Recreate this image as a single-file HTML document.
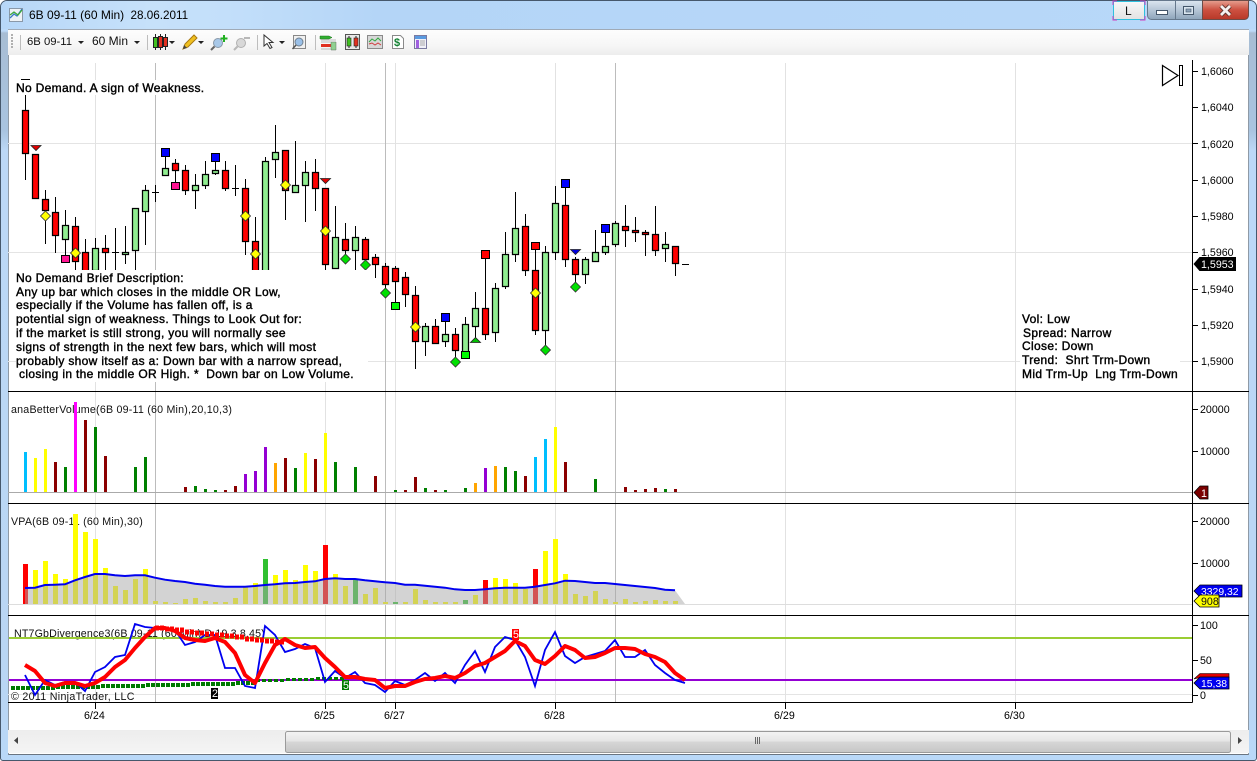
<!DOCTYPE html>
<html><head><meta charset="utf-8"><style>
html,body{margin:0;padding:0;background:#fff;width:1257px;height:761px;overflow:hidden}
#w{position:absolute;left:0;top:0;width:1257px;height:761px;box-sizing:border-box;border:1px solid #46586c;border-radius:7px 7px 3px 3px;background:linear-gradient(180deg,#b9d8f8 0,#bcdaf9 30px,#a7bdd4 32px,#a9c4e0 130px,#bcd8f6 150px,#b9d6f4 700px,#b9d8f8 100%);overflow:hidden}
#t{position:absolute;left:0;top:0;width:1255px;height:28px;background:linear-gradient(90deg,#b7d7f8 0,#c6e1fa 12%,#c3dffa 18%,#b4d5f7 30%,#b8d8f9 100%)}
#tb{position:absolute;left:7px;top:28px;width:1241px;height:26px;background:linear-gradient(180deg,#fdfdfd 0,#f6f6f6 60%,#ececec 100%);border-top:1px solid #a0aab6}
#c{position:absolute;left:7px;top:54px;width:1241px;height:700px;background:#fff;border-right:1px solid #8f9aa6;border-left:1px solid #8f9aa6;box-sizing:border-box;border-bottom:1px solid #6a7480}
svg{position:absolute;left:0;top:0}
text{font-family:"Liberation Sans",sans-serif;font-size:10.67px;fill:#111}
.b text{font-size:12px;stroke:#000;stroke-width:.4px;fill:#000;letter-spacing:.33px}
.l text{fill:#000}
</style></head><body>
<div id="w"><div id="t"></div><div id="tb"></div><div id="c"></div></div>
<svg width="1257" height="761" viewBox="0 0 1257 761">
<!-- scrollbar -->
<defs>
<linearGradient id="sb" x1="0" y1="0" x2="0" y2="1"><stop offset="0" stop-color="#ededed"/><stop offset="1" stop-color="#f4f4f4"/></linearGradient>
<linearGradient id="th" x1="0" y1="0" x2="0" y2="1"><stop offset="0" stop-color="#f4f4f4"/><stop offset=".45" stop-color="#e6e6e6"/><stop offset=".5" stop-color="#d6d6d6"/><stop offset="1" stop-color="#c6c6c6"/></linearGradient>
<linearGradient id="gb" x1="0" y1="0" x2="0" y2="1"><stop offset="0" stop-color="#dce6f0"/><stop offset=".5" stop-color="#b6c6d6"/><stop offset="1" stop-color="#8ea4ba"/></linearGradient>
<linearGradient id="rb" x1="0" y1="0" x2="0" y2="1"><stop offset="0" stop-color="#e6a090"/><stop offset=".5" stop-color="#cc5040"/><stop offset="1" stop-color="#b83828"/></linearGradient>
<linearGradient id="lb" x1="0" y1="0" x2="0" y2="1"><stop offset="0" stop-color="#f8f8f8"/><stop offset="1" stop-color="#e2e2e2"/></linearGradient>
</defs>
<rect x="8" y="730" width="1241" height="23" fill="url(#sb)"/>
<rect x="285.500" y="731.500" width="945" height="21" rx="2" fill="url(#th)" stroke="#9a9a9a"/>
<path d="M18 737v7l-4-3.500z" fill="#444"/><path d="M1238 737v7l4-3.500z" fill="#444"/>
<path d="M755.500 737v7M757.500 737v7M759.500 737v7" stroke="#666"/>

<!-- title -->
<rect x="9.500" y="8.500" width="13" height="13" fill="#eef2f6" stroke="#8a98a8"/>
<path d="M10 18l4-4 3 2 5-7" fill="none" stroke="#3a7ac8" stroke-width="1.300"/><path d="M10 15l4-3 4 3 4-5" fill="none" stroke="#3aa83a" stroke-width="1.300"/>
<text x="29" y="19" style="font-size:12px;fill:#000">6B 09-11 (60 Min)</text>
<text x="130.500" y="19" style="font-size:11.700px;fill:#000">28.06.2011</text>

<!-- window buttons -->
<rect x="1113.500" y="1.500" width="31" height="18" fill="url(#lb)" stroke="#2fc0de"/>
<path d="M1113 5V1h4M1140 1h5v4M1113 16v4h4M1140 20h5v-4" fill="none" stroke="#d040c0"/>
<text x="1125" y="15" style="font-size:12px">L</text>
<path d="M1147.500 0.500h28v19h-24a4 4 0 0 1-4-4z" fill="url(#gb)" stroke="#66788c"/>
<rect x="1175.500" y="0.500" width="27" height="19" fill="url(#gb)" stroke="#66788c"/>
<path d="M1202.500 0.500h46v15a4 4 0 0 1-4 4h-42z" fill="url(#rb)" stroke="#6c4c48"/>
<rect x="1156.500" y="10.500" width="11" height="4" fill="#fff" stroke="#44566a"/>
<rect x="1183.500" y="6.500" width="10" height="8" fill="#d8e4ee" stroke="#44566a" stroke-width="1"/><rect x="1186" y="9" width="5" height="3" fill="#8ea4ba" stroke="#44566a" stroke-width=".6"/>
<path d="M1221 6l9 9M1230 6l-9 9" stroke="#5a3028" stroke-width="4.500"/><path d="M1221 6l9 9M1230 6l-9 9" stroke="#f4f0ee" stroke-width="2.800"/>

<!-- toolbar -->
<path d="M12 34v14" stroke="#b0b0b0" stroke-width="2" stroke-dasharray="2 1"/>
<path d="M20.500 35v15M147.500 35v15M257.500 35v15M315.500 35v15" stroke="#bdbdbd"/>
<text x="27" y="45" style="font-size:11.300px">6B 09-11</text><text x="92" y="45" style="font-size:12px">60 Min</text>
<path d="M78 41h6l-3 3zM134 41h6l-3 3zM169 41h6l-3 3zM198 41h6l-3 3zM279 41h6l-3 3z" fill="#222"/>
<path d="M155.500 34v16M160.500 34v16M165.500 34v16" stroke="#222"/>
<rect x="153.500" y="37.500" width="4" height="10" fill="#40c020" stroke="#222"/><rect x="158.500" y="36.500" width="4" height="11" fill="#e03020" stroke="#222"/><rect x="163.500" y="37.500" width="4" height="9" fill="#e03020" stroke="#222"/>
<path d="M183 49l2-5 9-9 3 3-9 9z" fill="#f0c020" stroke="#a87810"/><path d="M183 49l1-4 3 3z" fill="#444"/>
<circle cx="218" cy="43" r="4.500" fill="#a8c8e8" stroke="#8898a8"/><path d="M214.500 46.500l-3.500 3.500" stroke="#666" stroke-width="2"/><path d="M224 35v7M220.500 38.500h7" stroke="#20b020" stroke-width="2"/>
<circle cx="241" cy="43" r="4.500" fill="#d8d8d8" stroke="#b0b0b0"/><path d="M237.500 46.500l-3.500 3.500" stroke="#b8b8b8" stroke-width="2"/><path d="M244 38h6" stroke="#b8b8b8" stroke-width="2"/>
<path d="M264 35v11l3-2.500 3 5 2-1-3-5h4z" fill="#fff" stroke="#333"/>
<rect x="293.500" y="35.500" width="12" height="13" fill="#f0f0f0" stroke="#888"/><circle cx="299" cy="42" r="4" fill="#9ac0e8" stroke="#708090"/><path d="M296 45l-3.500 4" stroke="#555" stroke-width="1.500"/>
<path d="M320 36h9l3 1.500-3 1.500h-9z" fill="#30b030" stroke="#207020" stroke-width=".5"/><path d="M321 44h10v3h-10z" fill="#e03020"/><path d="M331 42v8h5v-8z" fill="#90d090" stroke="#607060" stroke-width=".5"/><path d="M321 40h15M321 42h10M321 49h10" stroke="#bbb"/>
<rect x="345.500" y="34.500" width="14" height="15" fill="#e8e8e8" stroke="#555"/><path d="M349 36v12M356 36v12" stroke="#222"/><rect x="347" y="38" width="4" height="8" fill="#40c020" stroke="#222" stroke-width=".6"/><rect x="354" y="38" width="4" height="8" fill="#e03020" stroke="#222" stroke-width=".6"/>
<rect x="367.500" y="35.500" width="15" height="13" fill="#d8d8d8" stroke="#8a8a8a"/><path d="M369 42l3-3 3 2 3-3 3 3" fill="none" stroke="#30a840"/><path d="M369 44l3-1 3 2 3-2 3 2" fill="none" stroke="#d04040"/>
<path d="M392.500 35.500h8l3 3v10h-11z" fill="#fff" stroke="#8a8a8a"/><text x="394" y="46" style="font-size:11px;font-weight:bold;fill:#108030">$</text>
<rect x="414.500" y="35.500" width="12" height="13" fill="#f0f0f8" stroke="#7a7aa0"/><rect x="415" y="36" width="11" height="3" fill="#5a9ae0"/><path d="M417.500 40v8" stroke="#a060e0" stroke-width="3"/><path d="M420 41h5M420 43h5M420 45h5" stroke="#aaa"/>

<!-- gridlines -->
<g stroke-width="1" shape-rendering="crispEdges">
<path d="M8 143.500H1192M8 252.500H1192M8 361.500H1192" stroke="#e4e4e4"/>
<path d="M8 694.500H1192" stroke="#e4e4e4"/>
<path d="M95.500 63V702M325.500 63V702M395.500 63V702M555.500 63V702M785.500 63V702M1015.500 63V702" stroke="#e2e2e2"/>
<path d="M155.500 63V702M385.500 63V702M615.500 63V702" stroke="#bcbcbc"/>
</g>

<!-- wicks -->
<path stroke="#000" stroke-width="1" fill="none" shape-rendering="crispEdges" d="M25.500 95V180M45.500 190V244M55.500 197V253M65.500 210V260M75.500 217V270M85.500 239V270M95.500 238V270M105.500 235V270M115.500 228V270M125.500 226V264M135.500 250V270M145.500 185V245M155.500 185V202M165.500 152V172M175.500 159V183M185.500 165V195M195.500 174V209M205.500 161V189M215.500 157V175M225.500 161V191M235.500 165V196M245.500 179V255M255.500 217V270M265.500 157V170M275.500 125V178M285.500 150V220M295.500 141V192M305.500 161V222M315.500 159V211M325.500 188V270M335.500 206V269M345.500 223V257M355.500 226V270M365.500 237V265M375.500 254V278M385.500 263V290M395.500 266V303M405.500 272V307M415.500 286V369M425.500 323V356M435.500 319V344M445.500 317V347M455.500 328V357M465.500 317V352M475.500 292V338M485.500 254V340M495.500 283V342M505.500 232V289M515.500 192V262M525.500 214V276M535.500 246V335M545.500 246V350M555.500 186V260M565.500 183V267M575.500 257V284M585.500 257V284M595.500 230V261M605.500 228V255M615.500 221V247M625.500 205V247M635.500 217V242M645.500 230V256M655.500 206V256M665.500 232V262M675.500 246V276"/>
<path stroke="#000" stroke-width="1" fill="none" shape-rendering="crispEdges" d="M112 252.500h7M152 192.500h7M232 188.500h7M682 264.500h7M21 79.500h9"/>
<!-- red bodies -->
<path fill="#f00" stroke="#000" stroke-width="1.250" d="M22.500 110.500h6v43h-6zM32.500 154.500h6v44h-6zM42.500 199.500h6v11h-6zM52.500 212.500h6v23h-6zM72.500 226.500h6v35h-6zM82.500 252.500h6v20h-6zM102.500 248.500h6v4h-6zM172.500 163.500h6v7h-6zM182.500 170.500h6v20h-6zM222.500 170.500h6v18h-6zM242.500 188.500h6v53h-6zM252.500 241.500h6v30h-6zM282.500 150.500h6v40h-6zM312.500 172.500h6v16h-6zM322.500 188.500h6v76h-6zM342.500 239.500h6v11h-6zM362.500 239.500h6v20h-6zM372.500 257.500h6v7h-6zM382.500 266.500h6v18h-6zM392.500 268.500h6v13h-6zM402.500 277.500h6v17h-6zM412.500 295.500h6v46h-6zM432.500 326.500h6v17h-6zM452.500 334.500h6v16h-6zM482.500 308.500h6v26h-6zM522.500 226.500h6v44h-6zM532.500 270.500h6v60h-6zM562.500 205.500h6v54h-6zM572.500 259.500h6v15h-6zM622.500 226.500h6v4h-6zM632.500 230.500h6v2h-6zM642.500 232.500h6v2h-6zM652.500 234.500h6v16h-6zM672.500 246.500h6v17h-6z"/>
<!-- green bodies -->
<path fill="#90ee90" stroke="#000" stroke-width="1.250" d="M62.500 225.500h6v14h-6zM92.500 248.500h6v22h-6zM122.500 252.500h6v2h-6zM132.500 208.500h6v42h-6zM142.500 190.500h6v21h-6zM162.500 168.500h6v7h-6zM192.500 185.500h6v5h-6zM202.500 174.500h6v11h-6zM212.500 170.500h6v3h-6zM262.500 161.500h6v110h-6zM272.500 152.500h6v7h-6zM292.500 185.500h6v7h-6zM302.500 172.500h6v13h-6zM332.500 237.500h6v31h-6zM352.500 237.500h6v13h-6zM422.500 326.500h6v15h-6zM442.500 334.500h6v7h-6zM462.500 324.500h6v28h-6zM472.500 308.500h6v18h-6zM492.500 288.500h6v44h-6zM502.500 254.500h6v32h-6zM512.500 228.500h6v26h-6zM542.500 252.500h6v78h-6zM552.500 203.500h6v49h-6zM582.500 259.500h6v15h-6zM592.500 252.500h6v9h-6zM602.500 246.500h6v6h-6zM612.500 223.500h6v21h-6zM662.500 244.500h6v4h-6z"/>
<!-- markers -->
<path fill="#ff0" stroke="#333" stroke-width=".8" d="M45.500 211l5 5-5 5-5-5zM75.500 248l5 5-5 5-5-5zM245.500 211l5 5-5 5-5-5zM255.500 249l5 5-5 5-5-5zM285.500 180l5 5-5 5-5-5zM325.500 226l5 5-5 5-5-5zM535.500 288l5 5-5 5-5-5zM415.500 322l5 5-5 5-5-5z"/>
<path fill="#00e000" stroke="#333" stroke-width=".8" d="M345.500 254l5 5-5 5-5-5zM365.500 260l5 5-5 5-5-5zM385.500 288l5 5-5 5-5-5zM455.500 357l5 5-5 5-5-5zM545.500 345l5 5-5 5-5-5zM575.500 282l5 5-5 5-5-5z"/>
<path fill="#00f" stroke="#000" d="M161.500 148.500h8v8h-8zM211.500 153.500h8v8h-8zM441.500 313.500h8v8h-8zM561.500 179.500h8v8h-8zM601.500 224.500h8v8h-8z"/>
<path fill="#ff1493" stroke="#000" d="M61.500 255.500h8v7h-8zM171.500 182.500h8v7h-8z"/>
<path fill="#0f0" stroke="#000" d="M391.500 302.500h8v7h-8zM461.500 351.500h8v7h-8z"/>
<path fill="#f00" stroke="#000" d="M481.500 250.500h8v8h-8zM531.500 242.500h8v7h-8z"/>
<path fill="#e00000" stroke="#222" stroke-width=".8" d="M31 145.500h10l-5 5zM320.500 178.500h10l-5 5z"/>
<path fill="#0000e0" stroke="#222" stroke-width=".8" d="M570.500 249.500h10l-5 5z"/>
<path fill="#00c000" stroke="#222" stroke-width=".8" d="M470.500 342.500h10l-5-5z"/>

<!-- text boxes -->
<rect x="16" y="80" width="189" height="15" fill="#fff"/>
<rect x="16" y="270" width="352" height="112" fill="#fff"/>
<rect x="1020" y="312" width="160" height="70" fill="#fff"/>
<g class="b">
<text x="16" y="92">No Demand. A sign of Weakness.</text>
<text x="16" y="282">No Demand Brief Description:</text>
<text x="16" y="296">Any up bar which closes in the middle OR Low,</text>
<text x="16" y="309">especially if the Volume has fallen off, is a</text>
<text x="16" y="323">potential sign of weakness. Things to Look Out for:</text>
<text x="16" y="337">if the market is still strong, you will normally see</text>
<text x="16" y="351">signs of strength in the next few bars, which will most</text>
<text x="16" y="365">probably show itself as a: Down bar with a narrow spread,</text>
<text x="19" y="378">closing in the middle OR High. *&#160;&#160;Down bar on Low Volume.</text>
<text x="1022" y="323">Vol: Low</text>
<text x="1023" y="337">Spread: Narrow</text>
<text x="1022" y="350">Close: Down</text>
<text x="1022" y="364">Trend:&#160;&#160;Shrt Trm-Down</text>
<text x="1022" y="378">Mid Trm-Up&#160;&#160;Lng Trm-Down</text>
</g>

<!-- skip icon -->
<path d="M1162.500 65.500l15.500 10-15.500 10z" fill="#fff" stroke="#000" stroke-width="1.200"/>
<rect x="1179.500" y="65.500" width="3" height="20" fill="#fff" stroke="#000"/>

<!-- volume panel -->
<text x="11" y="413" style="letter-spacing:.22px">anaBetterVolume(6B 09-11 (60 Min),20,10,3)</text>
<path d="M8 492.500H1192" stroke="#aaa" shape-rendering="crispEdges"/>
<g stroke-width="3" fill="none" shape-rendering="crispEdges">
<path stroke="#00bfff" d="M25.500 452V492M535.500 457V492M545.500 439V492"/>
<path stroke="#ff0" d="M35.500 458V492M45.500 449V492M305.500 453V492M325.500 433V492M555.500 427V492"/>
<path stroke="#8b0000" d="M55.500 462V492M85.500 420V492M105.500 456V492M185.500 487V492M225.500 490V492M235.500 486V492M285.500 458V492M315.500 459V492M375.500 476V492M405.500 490V492M415.500 477V492M435.500 490V492M525.500 476V492M565.500 462V492M625.500 487V492M635.500 490V492M645.500 489V492M655.500 488V492M675.500 489V492"/>
<path stroke="#008000" d="M65.500 467V492M95.500 427V492M135.500 467V492M145.500 457V492M195.500 486V492M205.500 489V492M215.500 490V492M295.500 468V492M335.500 462V492M355.500 467V492M395.500 490V492M425.500 488V492M445.500 490V492M465.500 488V492M505.500 467V492M515.500 471V492M595.500 479V492M665.500 489V492"/>
<path stroke="#f0f" d="M75.500 402V492"/>
<path stroke="#9400d3" d="M245.500 474V492M255.500 471V492M265.500 447V492M485.500 468V492"/>
<path stroke="#ffa500" d="M275.500 463V492M475.500 483V492M495.500 466V492"/>
</g>

<!-- VPA panel -->
<text x="11" y="525" style="letter-spacing:.2px">VPA(6B 09-11 (60 Min),30)</text>
<path d="M8 604.500H1192" stroke="#ddd" shape-rendering="crispEdges"/>
<g stroke-width="5" fill="none" shape-rendering="crispEdges">
<path stroke="#ff0" d="M35.500 570V604M45.500 561V604M55.500 574V604M65.500 579V604M75.500 514V604M85.500 532V604M95.500 539V604M105.500 568V604M115.500 586V604M125.500 590V604M135.500 579V604M145.500 569V604M155.500 601V604M165.500 602V604M175.500 603V604M185.500 599V604M195.500 598V604M205.500 601V604M215.500 602V604M225.500 602V604M235.500 598V604M245.500 586V604M255.500 583V604M275.500 575V604M285.500 570V604M295.500 580V604M305.500 565V604M315.500 571V604M335.500 574V604M345.500 586V604M365.500 594V604M375.500 588V604M385.500 602V604M405.500 602V604M415.500 589V604M425.500 600V604M435.500 602V604M445.500 602V604M455.500 602V604M475.500 595V604M495.500 578V604M505.500 579V604M515.500 583V604M525.500 589V604M545.500 551V604M555.500 539V604M565.500 574V604M575.500 594V604M585.500 596V604M595.500 591V604M605.500 599V604M615.500 602V604M625.500 599V604M635.500 602V604M645.500 601V604M655.500 600V604M665.500 601V604M675.500 601V604"/>
<path stroke="#f00" d="M25.500 564V604M325.500 545V604M485.500 580V604M535.500 569V604"/>
<path stroke="#30c030" d="M265.500 559V604M355.500 580V604M395.500 602V604M465.500 600V604"/>
</g>
<path fill="#a8a8a8" fill-opacity=".5" d="M25 604V588L35 587.700 45 585 55 584.700 65 584.300 75 580.300 85 577 95 574 105 574 115 575.300 125 576 135 575.300 145 575.300 155 577.700 165 579.700 175 581 185 582 195 583.700 205 584.700 215 586 225 586.700 235 586.700 245 586.700 255 586 265 585 275 584.300 285 583.300 295 583 305 582 315 581.300 325 579 335 578.300 345 579 355 579 365 580.300 375 581.300 385 582.300 395 583 405 584.700 415 584.700 425 585.700 435 586.700 445 587.700 455 589.300 465 590 475 590 485 589.300 495 588.300 505 587.700 515 587.700 525 587.700 535 586.700 545 585 555 583.300 565 580.700 575 581 585 582 595 583 605 583 615 584 625 585 635 586 645 587 655 588 665 589.700 675 590.300 685 604z"/>
<polyline fill="none" stroke="#0000f0" stroke-width="2" points="25,588 35,587.700 45,585 55,584.700 65,584.300 75,580.300 85,577 95,574 105,574 115,575.300 125,576 135,575.300 145,575.300 155,577.700 165,579.700 175,581 185,582 195,583.700 205,584.700 215,586 225,586.700 235,586.700 245,586.700 255,586 265,585 275,584.300 285,583.300 295,583 305,582 315,581.300 325,579 335,578.300 345,579 355,579 365,580.300 375,581.300 385,582.300 395,583 405,584.700 415,584.700 425,585.700 435,586.700 445,587.700 455,589.300 465,590 475,590 485,589.300 495,588.300 505,587.700 515,587.700 525,587.700 535,586.700 545,585 555,583.300 565,580.700 575,581 585,582 595,583 605,583 615,584 625,585 635,586 645,587 655,588 665,589.700 675,590.300"/>

<!-- divergence panel -->
<text x="14" y="637" style="letter-spacing:.15px">NT7GbDivergence3(6B 09-11 (60 Min),D,19,3,8,45)</text>
<text x="11" y="700" style="letter-spacing:.3px">© 2011 NinjaTrader, LLC</text>
<path d="M9 638H1192" stroke="#9acd32" stroke-width="2"/>
<path d="M9 680H1192" stroke="#9400d3" stroke-width="2"/>
<path d="M11 688H56M56 687H101M101 686H146M146 685H191M191 684H236M236 683H256" stroke="#007a00" stroke-width="4" stroke-dasharray="4 1" fill="none" shape-rendering="crispEdges"/>
<path d="M256 680.500H286M286 679.500H316M316 678.500H346" stroke="#007a00" stroke-width="3" stroke-dasharray="4 2" fill="none" shape-rendering="crispEdges"/>
<polyline fill="none" stroke="#0000f0" stroke-width="1.800" points="25,675 35,695 45,680 55,685 65,682 75,682 85,691 95,672 105,667 115,657 125,655 135,624 145,627 155,628 165,628 175,630 185,645 195,642 205,635 215,635 225,668 235,668 245,686 255,688 265,626 275,635 285,652 295,649 305,644 315,648 325,682 335,671 345,678 355,672 365,683 375,685 385,692 395,681 405,685 415,680 425,673 435,681 445,673 455,683 465,665 475,651 485,672 495,647 505,637 515,640 525,657 535,686 545,650 555,632 565,656 575,663 585,657 595,654 605,651 615,640 625,657 635,657 645,650 655,665 665,673 675,680 685,683"/>
<path d="M155 628H165M165 629H175M175 630H185M185 632H195M195 633H205M205 634H215M215 635H225M225 636H235M235 637H245M245 639H255M255 640H265M265 641H275M275 642H285" stroke="#f00" stroke-width="5" stroke-dasharray="4 1" fill="none" shape-rendering="crispEdges"/>
<polyline fill="none" stroke="#f00" stroke-width="4" stroke-linejoin="round" points="25,665 35,671 45,683 55,686 65,683 75,683 85,686 95,683 105,677 115,667 125,660 135,648 145,637 155,628 165,628 175,631 185,638 195,640 205,641 215,638 225,642 235,653 245,675 255,683 265,663 275,645 285,639 295,645 305,648 315,647 325,658 335,667 345,677 355,677 365,679 375,680 385,688 395,686 405,686 415,682 425,679 435,678 445,676 455,678 465,673 475,666 485,663 495,657 505,651 515,641 525,646 535,660 545,664 555,656 565,646 575,650 585,658 595,657 605,653 615,648 625,648 635,649 645,654 655,657 665,662 675,673 685,680"/>
<rect x="211" y="688" width="7" height="11" fill="#000"/><text x="212" y="697" style="fill:#fff">2</text>
<rect x="342" y="680" width="7" height="10" fill="#007a00"/><text x="343" y="689" style="fill:#fff">5</text>
<rect x="512" y="629" width="7" height="11" fill="#f00"/><text x="513" y="638" style="fill:#fff">5</text>

<!-- axes / separators -->
<path d="M8 391.500H1249M8 503.500H1249M8 615.500H1249M8 702.500H1192.500M1192.500 60V702.500" stroke="#000" fill="none" shape-rendering="crispEdges"/>
<path stroke="#000" shape-rendering="crispEdges" d="M1193 71.500h5M1193 107.500h5M1193 143.500h5M1193 180.500h5M1193 216.500h5M1193 252.500h5M1193 289.500h5M1193 325.500h5M1193 361.500h5M1193 409.500h5M1193 451.500h5M1193 521.500h5M1193 563.500h5M1193 625.500h5M1193 660.500h5M1193 695.500h5M95.500 703v6M325.500 703v6M395.500 703v6M555.500 703v6M785.500 703v6M1015.500 703v6"/>
<g class="l">
<text x="1201" y="75">1,6060</text><text x="1201" y="111">1,6040</text><text x="1201" y="148">1,6020</text><text x="1201" y="184">1,6000</text><text x="1201" y="220">1,5980</text><text x="1201" y="256">1,5960</text><text x="1201" y="293">1,5940</text><text x="1201" y="329">1,5920</text><text x="1201" y="365">1,5900</text>
<text x="1200" y="413">20000</text><text x="1200" y="455">10000</text><text x="1200" y="525">20000</text><text x="1200" y="567">10000</text>
<text x="1200" y="629">100</text><text x="1200" y="664">50</text><text x="1200" y="699">0</text>
<text x="84" y="719">6/24</text><text x="314" y="719">6/25</text><text x="384" y="719">6/27</text><text x="544" y="719">6/28</text><text x="774" y="719">6/29</text><text x="1004" y="719">6/30</text>
</g>
<!-- tags -->
<path fill="#000" d="M1193.500 264l6-7h36.500v14h-36.500z"/><text x="1201" y="268" style="fill:#fff">1,5953</text>
<path fill="#7a0000" stroke="#000" stroke-width=".8" d="M1194 492.500l6-6.500h8v13h-8z"/><text x="1201" y="497" style="fill:#fff">1</text>
<path fill="#0000f0" stroke="#000" stroke-width=".8" d="M1194 591l6-6h42v12h-42z"/><text x="1201" y="595" style="fill:#fff;font-size:10.400px">3329,32</text>
<path fill="#ff0" stroke="#000" stroke-width=".8" d="M1194 601l6-6h19v12h-19z"/><text x="1201" y="605">908</text>
<path fill="#e00000" stroke="#000" stroke-width=".6" d="M1194 679l6-5.500h29v4h-29z"/>
<path fill="#0000f0" stroke="#000" stroke-width=".8" d="M1194 683l6-6h29v12h-29z"/><text x="1201" y="687" style="fill:#fff;font-size:10.400px">15,38</text>
</svg>
</body></html>
